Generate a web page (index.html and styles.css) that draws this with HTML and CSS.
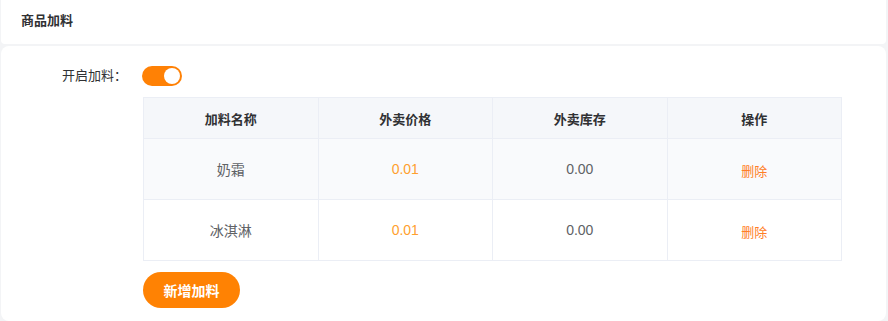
FILE: index.html
```html
<!DOCTYPE html>
<html lang="zh-CN">
<head>
<meta charset="utf-8">
<title>商品加料</title>
<link rel="stylesheet" href="styles.css">
</head>
<body>
<div class="page">
  <div class="card header-card">商品加料</div>
  <div class="card body-card">
    <div class="form-row">
      <div class="form-label">开启加料：</div>
      <div class="form-content">
        <div class="switch"><span class="knob"></span></div>
      </div>
    </div>
    <div class="form-row">
      <div class="form-label"></div>
      <div class="form-content">
        <table class="addon-table">
          <thead>
            <tr><th>加料名称</th><th>外卖价格</th><th>外卖库存</th><th>操作</th></tr>
          </thead>
          <tbody>
            <tr class="hover"><td>奶霜</td><td class="price">0.01</td><td>0.00</td><td><span class="del">删除</span></td></tr>
            <tr><td>冰淇淋</td><td class="price">0.01</td><td>0.00</td><td><span class="del">删除</span></td></tr>
          </tbody>
        </table>
        <button class="add-btn">新增加料</button>
      </div>
    </div>
  </div>
</div>
</body>
</html>
```

FILE: styles.css
```css
html, body {
  margin: 0;
  padding: 0;
  background: #f3f4f6;
  font-family: "Liberation Sans", "Noto Sans CJK SC", sans-serif;
}
.page {
  width: 888px;
  height: 321px;
  padding: 0 2px 0 1px;
  box-sizing: border-box;
  display: flex;
  flex-direction: column;
  gap: 2px;
}
.card {
  background: #fff;
}
.header-card {
  height: 44px;
  line-height: 42px;
  padding-left: 20px;
  font-size: 13px;
  font-weight: bold;
  color: #303133;
  border-radius: 0 0 4px 4px;
}
.body-card {
  flex: 1;
  border-radius: 8px;
  padding-top: 20px;
  box-sizing: border-box;
}
.form-row {
  display: flex;
}
.form-label {
  width: 142px;
  box-sizing: border-box;
  padding-right: 16px;
  text-align: right;
  font-size: 13px;
  color: #303133;
  line-height: 20px;
}
.form-content {
  flex: 0 0 699px;
}
.switch {
  width: 40px;
  height: 20px;
  border-radius: 10px;
  background: #ff8105;
  position: relative;
  margin-left: -1px;
}
.knob {
  position: absolute;
  right: 2px;
  top: 2px;
  width: 16px;
  height: 16px;
  border-radius: 50%;
  background: #fff;
}
.addon-table {
  margin-top: 11px;
  width: 699px;
  border-collapse: collapse;
  table-layout: fixed;
  font-size: 14px;
}
.addon-table th, .addon-table td {
  border: 1px solid #ebeef5;
  text-align: center;
  padding: 0;
}
.addon-table th {
  height: 40px;
  background: #f5f7fa;
  color: #303133;
  font-weight: bold;
  font-size: 13px;
}
.addon-table td {
  height: 60px;
  color: #606266;
}
.addon-table tr.hover td {
  background: #f9fafc;
}
.addon-table td.price {
  color: #ff9f2e;
}
.del {
  color: #ff7d26;
  font-size: 13px;
  position: relative;
  top: 1px;
}
.add-btn {
  display: block;
  margin-top: 11px;
  width: 97px;
  height: 36px;
  border: none;
  border-radius: 18px;
  background: #ff8203;
  color: #fff;
  font-family: "Liberation Sans", "Noto Sans CJK SC", sans-serif;
  font-size: 14px;
  font-weight: bold;
  padding: 0;
}
```
